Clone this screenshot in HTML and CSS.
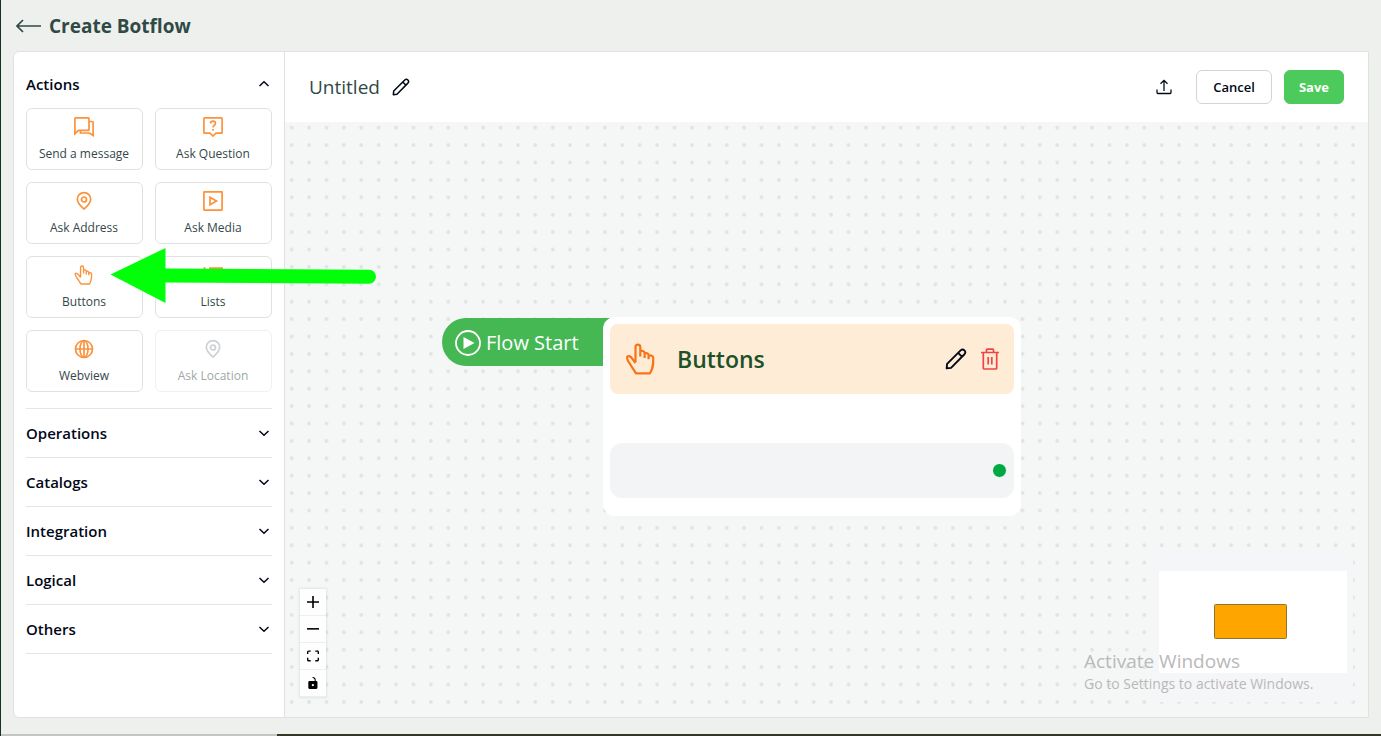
FILE: index.html
```html
<!DOCTYPE html>
<html lang="en">
<head>
<meta charset="utf-8">
<meta name="viewport" content="width=device-width, initial-scale=1">
<title>Create Botflow</title>
<link rel="stylesheet" href="styles.css">
</head>
<body>
<svg class="defs" width="0" height="0" aria-hidden="true">
    <symbol id="chevron" viewBox="0 0 16 16"><path d="M3.500 6L8 10.200 12.500 6" fill="none" stroke="currentColor" stroke-width="1.500"/></symbol>
    <symbol id="pin" viewBox="0 0 20 20"><path d="M10 1.700c-3.900 0-6.700 2.900-6.700 6.600 0 4.200 4 7.200 6.700 9.700 2.700-2.500 6.700-5.500 6.700-9.700 0-3.700-2.800-6.600-6.700-6.600z" fill="none" stroke="currentColor" stroke-width="1.700"/><circle cx="10" cy="8.500" r="2.500" fill="none" stroke="currentColor" stroke-width="1.700"/></symbol>
    <symbol id="hand" viewBox="0 0 32 32"><path d="M10.500 19.500V4c0-3.300 4.800-3.300 4.800 0v9.500M15.300 13V8.500c1.500-1.200 4.300-.6 4.300 1.600v5M19.600 10.500c1.600-1 4 0 4 1.800v4M23.600 12.800c2-1 4.600 0 4.600 2.200 0 6 .3 9.500-3.200 15.300H11L3.400 18.500c-1.500-2.800-2-4.300-.8-5.200 3-1.300 4.400 2 7.900 6.700" fill="none" stroke="currentColor" stroke-width="2.200" stroke-linejoin="round"/></symbol>
    <symbol id="pencil" viewBox="0 0 20 20"><path d="M1.500 18.500l.4-4L14.200 2.200c2.400-2.200 5.600 1 3.500 3.500L5.500 18.100zM12 4.500L15.500 8" fill="none" stroke="currentColor" stroke-width="1.700" stroke-linejoin="round"/></symbol>
</svg>

<div class="app">
    <header class="page-head">
        <a href="#" class="back" aria-label="Back">
            <svg width="25" height="14" viewBox="0 0 25 14"><path d="M7 1L1 7l6 6M1 7h24" fill="none" stroke="currentColor" stroke-width="1.700"/></svg>
        </a>
        <h1>Create Botflow</h1>
    </header>

    <div class="panel">
        <aside class="sidebar">
            <section class="group">
                <button type="button" class="group-head open">Actions <svg width="16" height="16"><use href="#chevron"/></svg></button>
                <div class="cards">
                    <button type="button" class="card">
                        <svg width="20" height="20" viewBox="0 0 20 20" fill="none" stroke="currentColor" stroke-width="1.700"><path d="M.9 16.700V1.600q0-.7.7-.7h12.700q.7 0 .7.700v11.100q0 .7-.7.700H4.500z"/><path d="M15 4.500h3.400q.7 0 .7.700v13.300l-3.600-2.500H6.500v-2.500"/></svg>
                        Send a message
                    </button>
                    <button type="button" class="card">
                        <svg width="20" height="20" viewBox="0 0 20 20" fill="none" stroke="currentColor" stroke-width="1.700"><path d="M1.600.9h16.800q.7 0 .7.700v13.900q0 .7-.7.700H13l-3 2.800-3-2.800H1.600q-.7 0-.7-.7V1.600q0-.7.7-.7z"/><path d="M7.500 6.500c0-3.300 5-3.300 5 0 0 1.800-2.500 1.800-2.500 4M10 12v1.800"/></svg>
                        Ask Question
                    </button>
                    <button type="button" class="card">
                        <svg width="20" height="20"><use href="#pin"/></svg>
                        Ask Address
                    </button>
                    <button type="button" class="card">
                        <svg width="20" height="20" viewBox="0 0 20 20" fill="none" stroke="currentColor" stroke-width="1.700"><rect x=".9" y=".9" width="18.200" height="18.200" rx=".5"/><path d="M7 6.200v7.600l6.500-3.800z"/></svg>
                        Ask Media
                    </button>
                    <button type="button" class="card">
                        <svg width="20" height="20"><use href="#hand"/></svg>
                        Buttons
                    </button>
                    <button type="button" class="card">
                        <svg width="20" height="20" viewBox="0 0 20 20" fill="none" stroke="currentColor" stroke-width="1.700"><path d="M.5 3.200h2M6 3.200h14M.5 10h2M6 10h14M.5 16h2M6 16h14"/></svg>
                        Lists
                    </button>
                    <button type="button" class="card">
                        <svg width="20" height="20" viewBox="0 0 20 20" fill="none" stroke="currentColor" stroke-width="1.700"><circle cx="10" cy="10" r="8.500"/><ellipse cx="10" cy="10" rx="4" ry="8.500"/><path d="M10 1.500v17M1.500 10h17"/></svg>
                        Webview
                    </button>
                    <button type="button" class="card" disabled>
                        <svg width="20" height="20"><use href="#pin"/></svg>
                        Ask Location
                    </button>
                </div>
            </section>
            <section class="group"><button type="button" class="group-head">Operations <svg width="16" height="16"><use href="#chevron"/></svg></button></section>
            <section class="group"><button type="button" class="group-head">Catalogs <svg width="16" height="16"><use href="#chevron"/></svg></button></section>
            <section class="group"><button type="button" class="group-head">Integration <svg width="16" height="16"><use href="#chevron"/></svg></button></section>
            <section class="group"><button type="button" class="group-head">Logical <svg width="16" height="16"><use href="#chevron"/></svg></button></section>
            <section class="group"><button type="button" class="group-head">Others <svg width="16" height="16"><use href="#chevron"/></svg></button></section>
        </aside>

        <main class="editor">
            <div class="toolbar">
                <h2>Untitled</h2>
                <button type="button" class="icon-btn" aria-label="Rename"><svg width="18" height="18"><use href="#pencil"/></svg></button>
                <button type="button" class="icon-btn export" aria-label="Export">
                    <svg width="16" height="16" viewBox="0 0 16 16" fill="none" stroke="currentColor" stroke-width="1.300"><path d="M8 12V1.500M4.500 4.800L8 1.300l3.500 3.500M1 10.500v3q0 1 1 1h12q1 0 1-1v-3"/></svg>
                </button>
                <button type="button" class="btn">Cancel</button>
                <button type="button" class="btn btn-save">Save</button>
            </div>

            <div class="canvas">
                <svg class="grid" width="100%" height="100%" aria-hidden="true">
                    <pattern id="dots" width="174" height="174" patternUnits="userSpaceOnUse" patternTransform="translate(-2 -3) scale(.1)"><circle cx="87" cy="87" r="19" fill="#e0e3e2"/></pattern>
                    <rect width="100%" height="100%" fill="url(#dots)"/>
                </svg>

                <div class="start-node">
                    <svg width="26" height="26" viewBox="0 0 26 26"><circle cx="13" cy="13" r="12" fill="none" stroke="#fff" stroke-width="1.800"/><path d="M8.500 7v12l11-6z" fill="#fff"/></svg>
                    Flow Start
                </div>

                <article class="node">
                    <div class="node-head">
                        <svg class="node-icon" width="32" height="32"><use href="#hand"/></svg>
                        <h3>Buttons</h3>
                        <button type="button" class="icon-btn" aria-label="Edit"><svg width="22" height="22"><use href="#pencil"/></svg></button>
                        <button type="button" class="icon-btn delete" aria-label="Delete">
                            <svg width="18" height="22" viewBox="0 0 18 22" fill="none" stroke="currentColor" stroke-width="1.700"><path d="M0 4.500h18M5.500 4.500V2q0-.9.900-.9h5.200q.9 0 .9.900v2.500M2.300 4.500V20q0 1 1 1h11.400q1 0 1-1V4.500M7.200 9v7.500M10.800 9v7.500"/></svg>
                        </button>
                    </div>
                    <div class="node-row"><span class="handle"></span></div>
                </article>

                <div class="controls">
                    <button type="button" aria-label="Zoom in"><svg width="12" height="12" viewBox="0 0 32 32"><path d="M32 18.133H18.133V32h-4.266V18.133H0v-4.266h13.867V0h4.266v13.867H32z"/></svg></button>
                    <button type="button" aria-label="Zoom out"><svg width="12" height="12" viewBox="0 0 32 5"><path d="M0 0h32v4.200H0z"/></svg></button>
                    <button type="button" aria-label="Fit view"><svg width="12" height="12" viewBox="0 0 32 30"><path d="M3.692 4.630c0-.53.4-.938.939-.938h5.215V0H4.708C2.130 0 0 2.054 0 4.630v5.216h3.692V4.631zM27.354 0h-5.200v3.692h5.170c.53 0 .984.4.984.939v5.215H32V4.631A4.624 4.624 0 0027.354 0zm.954 24.830c0 .532-.4.940-.939.940h-5.215v3.768h5.215c2.577 0 4.631-2.130 4.631-4.707v-5.139h-3.692v5.139zm-23.677.940a.919.919 0 01-.939-.940v-5.138H0v5.139c0 2.577 2.130 4.707 4.708 4.707h5.138V25.770H4.631z"/></svg></button>
                    <button type="button" aria-label="Toggle lock"><svg width="12" height="12" viewBox="0 0 25 32"><path d="M21.333 10.667H19.810V7.619C19.810 3.429 16.380 0 12.190 0c-4.114 1.828-1.370 2.133.305 2.438 1.676.305 4.420 2.590 4.420 5.181v3.048H3.047A3.056 3.056 0 000 13.714v15.238A3.056 3.056 0 003.048 32h18.285a3.056 3.056 0 003.048-3.048V13.714a3.056 3.056 0 00-3.048-3.047zM12.190 24.533a3.056 3.056 0 01-3.047-3.047 3.056 3.056 0 013.047-3.048 3.056 3.056 0 013.048 3.048 3.056 3.056 0 01-3.048 3.047z"/></svg></button>
                </div>

                <svg class="minimap" width="200" height="150" viewBox="0 0 200 150" role="img" aria-label="Mini map">
                    <rect width="200" height="150" fill="#f5f6f8"/>
                    <rect x="6" y="19" width="188" height="102" fill="#fff"/>
                    <rect x="61.500" y="52.500" width="72" height="34" rx="1" fill="orange" stroke="#8f7330"/>
                </svg>

                <div class="watermark">
                    <p class="watermark-title">Activate Windows</p>
                    <p>Go to Settings to activate Windows.</p>
                </div>
            </div>
        </main>
    </div>
    <div class="taskbar"></div>
</div>

<svg class="pointer" width="268" height="58" viewBox="0 0 268 58" aria-hidden="true">
    <path d="M56 27.500L259 28.700" stroke="#00ff09" stroke-width="14" stroke-linecap="round"/>
    <path d="M.5 26.500L55.500 0v55z" fill="#00ff09"/>
</svg>
</body>
</html>
```
FILE: styles.css
```css
* { box-sizing: border-box; }
body { margin: 0; background: #eef0ed; color: #020817; font: 14px/20px "Open Sans", "Noto Sans", sans-serif; }
h1, h2, h3, p { margin: 0; }
button { font: inherit; color: inherit; padding: 0; border: 0; background: none; cursor: pointer; }
svg { display: block; flex: none; }
.defs { position: absolute; }

.app { display: flex; flex-direction: column; min-height: 100vh; border-left: 1px solid #14351f; }

.page-head { display: flex; align-items: center; gap: 8px; height: 51px; padding: 0 15px; color: #2f4a45; }
.page-head h1 { font-size: 19px; font-weight: 700; line-height: 28px; }
.back { color: inherit; }

.panel { display: flex; flex: 1; margin: 0 12px 16px; border: 1px solid #dfe2e0; border-radius: 6px 0 0 6px; background: #fff; overflow: hidden; }

/* sidebar */
.sidebar { flex: none; width: 271px; padding: 8px 12px; border-right: 1px solid #dfe2e0; }
.group { border-bottom: 1px solid #e4e6e6; }
.group-head { display: flex; align-items: center; justify-content: space-between; width: 100%; height: 48px; font-size: 15px; font-weight: 600; }
.group-head.open svg { transform: rotate(180deg); }
.cards { display: grid; grid-template-columns: 1fr 1fr; gap: 12px; padding-bottom: 16px; }
.card { display: flex; flex-direction: column; align-items: center; gap: 9px; height: 62px; padding: 8px 1px 0 0; border: 1px solid #dfe2e0; border-radius: 6px; color: #33474a; font-size: 12px; line-height: 16px; }
.card svg { color: #fb923c; }
.card:disabled { border-color: #eff0f0; color: #a0a8a8; cursor: default; }
.card:disabled svg { color: #cdd0d5; }

/* editor */
.editor { display: flex; flex-direction: column; flex: 1; min-width: 0; }
.toolbar { display: flex; align-items: center; gap: 12px; height: 70px; padding: 0 24px; }
.toolbar h2 { color: #2f4a45; font-size: 19px; font-weight: 500; line-height: 28px; }
.export { margin-left: auto; margin-right: 12px; }
.btn { height: 34px; padding: 0 16px; border: 1px solid #d1d5db; border-radius: 6px; font-size: 13px; font-weight: 600; }
.btn-save { padding: 0 14px; border-color: #4cca5b; background: #4cca5b; color: #fff; font-weight: 700; }

.canvas { position: relative; flex: 1; background: #f5f7f6; overflow: hidden; }
.grid { position: absolute; inset: 0; }

.start-node { position: absolute; left: 157px; top: 196px; display: flex; align-items: center; gap: 5px; width: 180px; height: 48px; padding: 2px 0 0 13px; border-radius: 24px 0 0 24px; background: #45b854; color: #fff; font-size: 20px; }

.node { position: absolute; left: 318px; top: 195px; width: 418px; padding: 7px 7px 18px; border-radius: 12px; background: #fff; }
.node-head { display: flex; align-items: center; gap: 14px; height: 70px; padding: 0 15px; border-radius: 8px; background: #ffecd6; }
.node-head h3 { flex: 1; margin-left: 6px; color: #1c5229; font-size: 23px; font-weight: 600; line-height: 32px; }
.node-icon { color: #f97316; }
.delete { color: #ef4444; }
.node-row { display: flex; align-items: center; justify-content: flex-end; height: 55px; margin-top: 49px; padding-right: 7px; border-radius: 12px; background: #f2f4f6; }
.handle { width: 15px; height: 15px; border: 1px solid #fff; border-radius: 50%; background: #00a843; }

.controls { position: absolute; left: 15px; bottom: 20px; box-shadow: 0 0 2px 1px rgba(0, 0, 0, .08); }
.controls button { display: flex; align-items: center; justify-content: center; width: 26px; height: 27px; border-bottom: 1px solid #eee; background: #fefefe; }

.minimap { position: absolute; right: 15px; bottom: 15px; }

.watermark { position: absolute; right: 48px; bottom: 23px; width: 236px; color: #b9b9b9; white-space: nowrap; pointer-events: none; }
.watermark-title { font-size: 19px; line-height: 26px; }

.taskbar { height: 2px; background: linear-gradient(90deg, #c4c6c3 276px, #333825 276px); }

.pointer { position: absolute; left: 110px; top: 248px; pointer-events: none; }
```
